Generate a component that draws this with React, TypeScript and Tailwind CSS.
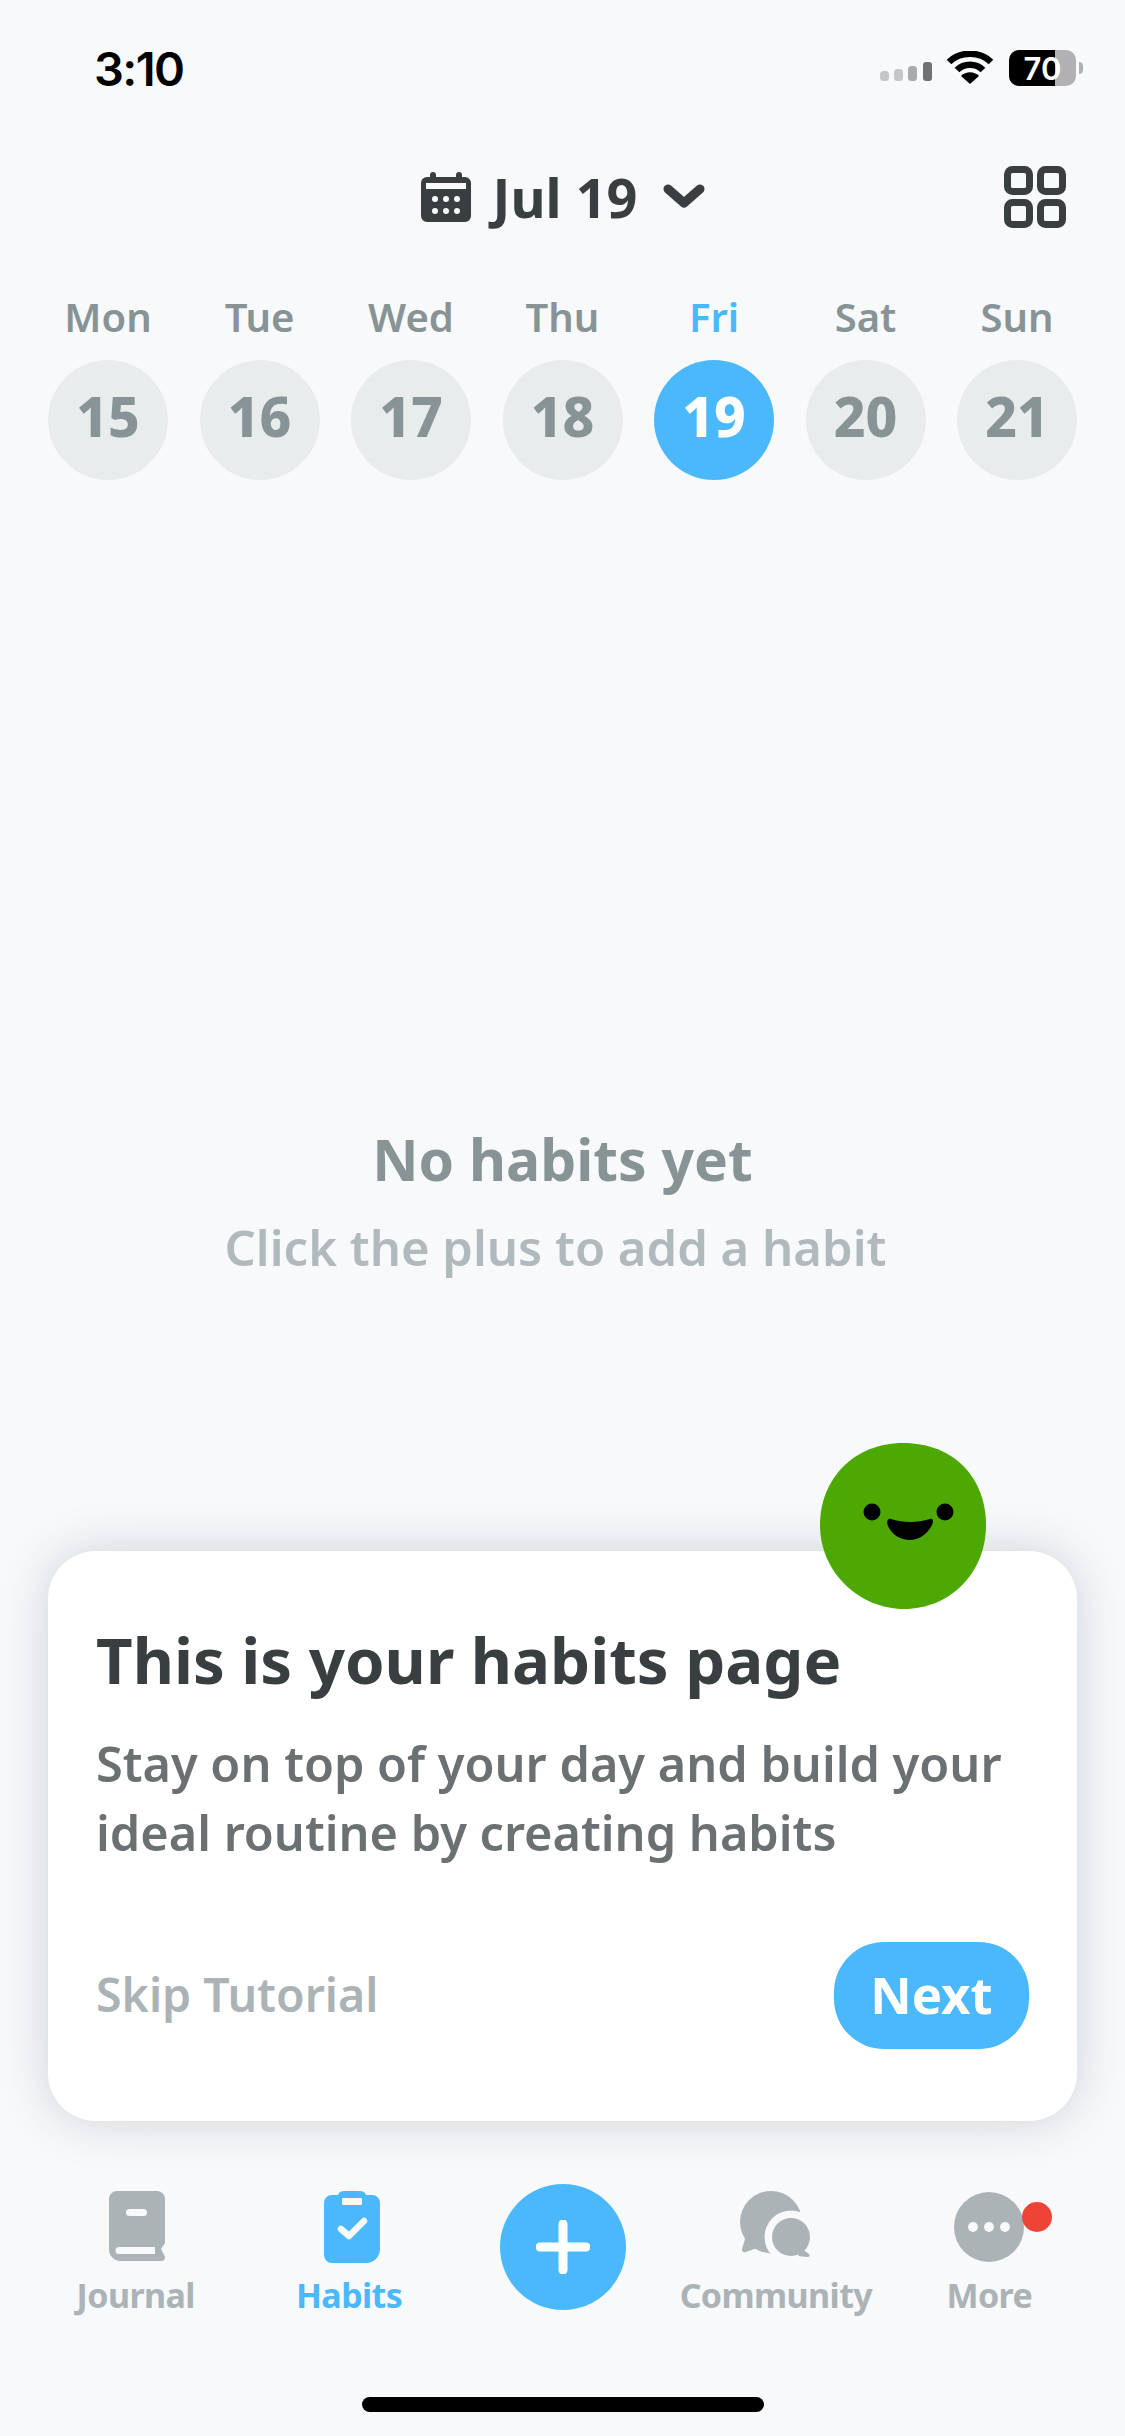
import React from "react";

const days = [
  ["Mon", "15"], ["Tue", "16"], ["Wed", "17"], ["Thu", "18"], ["Fri", "19"], ["Sat", "20"], ["Sun", "21"],
];

function StatusIcons() {
  return (
    <div className="flex items-center">
      <svg width="55" height="20" viewBox="0 0 55 20" className="mr-[12px] mt-[8px]">
        <rect x="0" y="9" width="9" height="10" rx="3.5" fill="#c4c6c8" />
        <rect x="14" y="7" width="9" height="12" rx="3.5" fill="#c4c6c8" />
        <rect x="28" y="4" width="9" height="15" rx="3.5" fill="#a8aaac" />
        <rect x="43" y="0" width="9" height="19" rx="3" fill="#6f7173" />
      </svg>
      <svg width="46" height="34" viewBox="0 0 46 34" className="mr-[16px]">
        <path d="M2 11 C13 0 33 0 44 11" stroke="#000" strokeWidth="6.5" fill="none" strokeLinecap="butt" />
        <path d="M10 19 C17 12 29 12 36 19" stroke="#000" strokeWidth="6.5" fill="none" />
        <path d="M23 33 L14 25 C19 20 27 20 32 25 Z" fill="#000" />
      </svg>
      <div className="relative flex h-[36px] w-[67px] overflow-hidden rounded-[10px] bg-[#b1b1b3]">
        <div className="h-full w-[46px] bg-black" />
        <span className="absolute inset-0 flex items-center justify-center font-['Inter',sans-serif] text-[31px] font-semibold leading-none text-white">70</span>
      </div>
      <div className="ml-[3px] h-[12px] w-[4px] rounded-r-full bg-[#b1b1b3]" />
    </div>
  );
}

function NavLabel({ children, active }: { children: React.ReactNode; active?: boolean }) {
  return (
    <span className={`mt-[8px] text-[34px] font-bold leading-[48px] tracking-[-0.6px] ${active ? "text-[#4cb8fc]" : "text-[#abb3b6]"}`}>
      {children}
    </span>
  );
}

export default function App() {
  return (
    <div className="flex h-[2436px] w-[1125px] flex-col overflow-hidden bg-[#f7f9fb] font-['Noto_Sans',sans-serif]">
      {/* status bar */}
      <div className="flex h-[136px] items-center justify-between pl-[94px] pr-[42px]">
        <span className="font-['Inter',sans-serif] text-[47px] font-semibold leading-none tracking-[-1.6px] text-black">3:10</span>
        <StatusIcons />
      </div>

      {/* header */}
      <div className="relative flex h-[122px] items-center justify-center">
        <div className="ml-[2px] flex items-center">
          <svg width="50" height="50" viewBox="0 0 50 50" className="mr-[22px]">
            <path d="M12 0 a3 3 0 0 1 3 3 V5 H35 V3 a3 3 0 0 1 6 0 V5 H44 a6 6 0 0 1 6 6 V44 a6 6 0 0 1 -6 6 H6 a6 6 0 0 1 -6 -6 V11 a6 6 0 0 1 6 -6 H9 V3 a3 3 0 0 1 3 -3 Z" fill="#393e40" />
            <rect x="5" y="11" width="40" height="6" fill="#f7f9fb" />
            {[14, 25, 36].map((x) => (
              <React.Fragment key={x}>
                <circle cx={x} cy="27" r="3" fill="#f7f9fb" />
                <circle cx={x} cy="39" r="3" fill="#f7f9fb" />
              </React.Fragment>
            ))}
          </svg>
          <span className="text-[54px] font-bold leading-none text-[#393e40]">Jul 19</span>
          <svg width="44" height="28" viewBox="0 0 44 28" className="ml-[25px]">
            <path d="M6 6 L22 20 L38 6" stroke="#393e40" strokeWidth="9" fill="none" strokeLinecap="round" strokeLinejoin="round" />
          </svg>
        </div>
        <svg width="62" height="62" viewBox="0 0 62 62" className="absolute right-[59px] top-[30px]">
          {[[3.5, 3.5], [36.5, 3.5], [3.5, 36.5], [36.5, 36.5]].map(([x, y]) => (
            <rect key={`${x}-${y}`} x={x} y={y} width="22" height="22" rx="5" fill="none" stroke="#393e40" strokeWidth="7" />
          ))}
        </svg>
      </div>

      {/* week */}
      <div className="mt-[35px] flex justify-between px-[48px]">
        {days.map(([d, n]) => {
          const active = n === "19";
          return (
            <div key={n} className="flex w-[120px] flex-col items-center">
              <span className={`text-[40px] font-semibold leading-[48px] ${active ? "text-[#4cb8fc]" : "text-[#879394]"}`}>{d}</span>
              <div className={`mt-[19px] flex h-[120px] w-[120px] items-center justify-center rounded-full pb-[8px] text-[55px] font-extrabold ${active ? "bg-[#4cb8fc] text-white" : "bg-[#e9eced] text-[#879394]"}`}>
                {n}
              </div>
            </div>
          );
        })}
      </div>

      {/* empty state */}
      <div className="mt-[641px] flex flex-col items-center">
        <span className="text-[57px] font-bold leading-[76px] text-[#879394]">No habits yet</span>
        <span className="mr-[14px] mt-[18px] text-[49px] font-semibold leading-[64px] text-[#b0b9bc]">Click the plus to add a habit</span>
      </div>

      {/* card */}
      <div className="relative mx-[48px] mt-[272px] h-[570px] rounded-[48px] bg-white px-[48px] pt-[65px] shadow-[0_0_50px_rgba(50,60,70,0.2)]">
        <svg width="166" height="166" viewBox="0 0 166 166" className="absolute left-[772px] top-[-108px]">
          <path d="M83 0 C135 0 166 36 166 82 C166 130 130 166 84 166 C40 166 0 130 0 82 C0 36 34 0 83 0 Z" fill="#4da802" />
          <circle cx="52" cy="69" r="8.5" fill="#000" />
          <circle cx="125" cy="69" r="8.5" fill="#000" />
          <path d="M71 76 C83 80 97 80 110 76 C113 75 114 78 112 82 C107 92 98 97 90 97 C81 97 72 92 68 83 C66 78 68 75 71 76 Z" fill="#000" />
        </svg>
        <h1 className="text-[63.5px] font-bold leading-[88px] text-[#393e40]">This is your habits page</h1>
        <p className="mt-[25px] text-[48.7px] font-semibold leading-[68.5px] text-[#6b7072]">
          Stay on top of your day and build your
          <br />
          ideal routine by creating habits
        </p>
        <div className="mt-[76px] flex items-center justify-between">
          <span className="mb-[3px] text-[46.5px] font-semibold leading-none text-[#abb3b6]">Skip Tutorial</span>
          <button className="flex h-[107px] w-[195px] items-center justify-center rounded-[50px] bg-[#4cb8fc] pb-[3px] text-[51px] font-bold text-white">
            Next
          </button>
        </div>
      </div>

      {/* tabs */}
      <div className="mt-[65px] grid grid-cols-5 px-[29px]">
        <div className="flex flex-col items-center pt-[5px]">
          <svg width="56" height="70" viewBox="0 0 56 70" className="ml-[2px] mb-[2px]">
            <path d="M8 0 H48 a8 8 0 0 1 8 8 V52 L52 58 L56 66 Q56 70 52 70 H12 C4 70 0 64 0 58 V8 a8 8 0 0 1 8 -8 Z" fill="#abb3b6" />
            <rect x="17" y="18" width="21" height="7" rx="3.5" fill="#f7f9fb" />
            <path d="M10 56 H46 V63 H10 a3.5 3.5 0 0 1 0 -7 Z" fill="#f7f9fb" />
          </svg>
          <NavLabel>Journal</NavLabel>
        </div>
        <div className="flex flex-col items-center pt-[5px]">
          <svg width="56" height="72" viewBox="0 0 56 72" className="ml-[6px]">
            <path d="M8 4 H14 C15 1 17 0 20 0 H36 C39 0 41 1 42 4 H48 a8 8 0 0 1 8 8 V58 a14 14 0 0 1 -14 14 H8 a8 8 0 0 1 -8 -8 V12 a8 8 0 0 1 8 -8 Z" fill="#4cb8fc" />
            <rect x="18" y="7" width="20" height="7" rx="1" fill="#f7f9fb" />
            <path d="M17 38 L25 45 L40 30" stroke="#f7f9fb" strokeWidth="6.5" strokeLinecap="round" strokeLinejoin="round" fill="none" />
          </svg>
          <NavLabel active>Habits</NavLabel>
        </div>
        <div className="flex justify-center">
          <div className="-mt-[2px] ml-[1px] flex h-[126px] w-[126px] items-center justify-center rounded-full bg-[#4cb8fc]">
            <svg width="54" height="54" viewBox="0 0 54 54">
              <path d="M27 4 V50 M4 27 H50" stroke="#fff" strokeWidth="9" strokeLinecap="round" />
            </svg>
          </div>
        </div>
        <div className="flex flex-col items-center pt-[5px]">
          <svg width="72" height="72" viewBox="0 0 72 72" className="ml-[1px]">
            <path d="M5 48 L2 58 Q2 62 6 61 L17 57 L31 63 L42 40 L31 31 Z" fill="#abb3b6" />
            <circle cx="31" cy="31" r="31" fill="#abb3b6" />
            <circle cx="51" cy="46" r="26.5" fill="#f7f9fb" />
            <circle cx="51" cy="46" r="19" fill="#abb3b6" />
            <path d="M62 58 L69 63 Q71 66 67 66 L58 65 Z" fill="#abb3b6" />
          </svg>
          <NavLabel>Community</NavLabel>
        </div>
        <div className="relative flex flex-col items-center pt-[5px]">
          <svg width="72" height="72" viewBox="0 0 72 72">
            <circle cx="36" cy="36" r="35" fill="#abb3b6" />
            <circle cx="20" cy="36" r="5" fill="#f7f9fb" />
            <circle cx="36" cy="36" r="5" fill="#f7f9fb" />
            <circle cx="52" cy="36" r="5" fill="#f7f9fb" />
          </svg>
          <NavLabel>More</NavLabel>
          <div className="absolute left-[139px] top-[16px] h-[30px] w-[30px] rounded-full bg-[#ee4438]" />
        </div>
      </div>

      {/* home indicator */}
      <div className="mt-[78px] flex justify-center">
        <div className="h-[15px] w-[402px] rounded-full bg-black" />
      </div>
    </div>
  );
}
